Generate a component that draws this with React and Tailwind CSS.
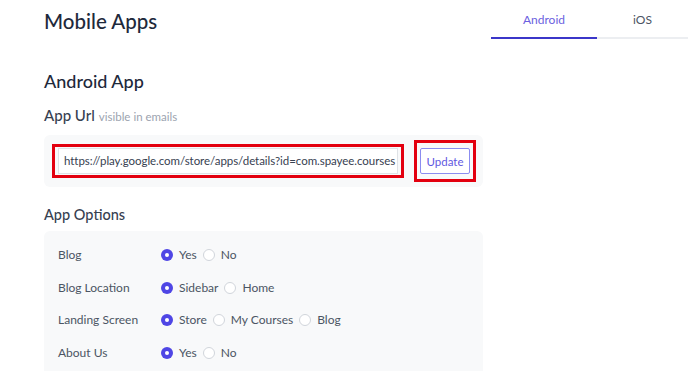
import React from "react";

const font = { fontFamily: 'Lato, "Noto Sans", sans-serif' };

const Radio = ({ checked, label }) => (
  <label className="flex items-center gap-[6px] mr-[6px]">
    {checked ? (
      <span className="w-[12px] h-[12px] rounded-full bg-[#4f46e5] flex items-center justify-center">
        <span className="w-[4px] h-[4px] rounded-full bg-white" />
      </span>
    ) : (
      <span className="w-[12px] h-[12px] rounded-full bg-white border border-[#d1d5db]" />
    )}
    <span>{label}</span>
  </label>
);

const OptionRow = ({ label, options }) => (
  <div className="flex items-center h-[32.5px]">
    <div className="w-[117px] pl-[14px]">{label}</div>
    <div className="flex items-center">
      {options.map((o, i) => (
        <Radio key={o} label={o} checked={i === 0} />
      ))}
    </div>
  </div>
);

export default function App() {
  return (
    <div className="w-[688px] h-[371px] overflow-hidden bg-white text-[#1f2937]" style={font}>
      <div className="flex items-start justify-between">
        <h1 className="pl-[44px] pt-[7px] text-[20.5px] leading-[28px] font-medium text-[#1e293b]">Mobile Apps</h1>
        <div className="flex w-[197px] border-b-2 border-[#eceef1] text-[12px]">
          <div className="w-[106px] h-[39px] -mb-[2px] pt-[2px] flex items-center justify-center border-b-2 border-[#3b36c9] text-[#6b5fe0]">
            Android
          </div>
          <div className="flex-1 h-[37px] pt-[2px] flex items-center justify-center text-[#4b5563]">iOS</div>
        </div>
      </div>

      <div className="pl-[44px] w-[483px]">
        <h2 className="mt-[30px] text-[18px] leading-[24px] font-medium text-[#1e293b]">Android App</h2>
        <div className="mt-[12px] flex items-baseline gap-[4px] leading-[20px]">
          <span className="text-[15px] font-medium text-[#374151]">App Url</span>
          <span className="text-[11.5px] text-[#9ca3af]">visible in emails</span>
        </div>

        <div className="mt-[8px] h-[52px] bg-[#f8f9fa] rounded-md flex items-center pl-[8px] gap-[10px]">
          <div className="border-[3px] border-[#e3000f] px-[3px] py-[1px]">
            <div className="w-[340px] h-[26px] bg-white border border-[#dfe2e6] flex items-center pl-[5px] text-[11.5px] tracking-[-0.05px] text-[#374151] whitespace-nowrap overflow-hidden">
              https://play.google.com/store/apps/details?id=com.spayee.courses
            </div>
          </div>
          <div className="border-[3px] border-[#e3000f] px-[3px] py-[5px]">
            <button className="w-[50px] h-[26px] px-0 bg-white border border-[#8b8cf0] rounded-[2px] text-[11.5px] text-[#5f57df]">
              Update
            </button>
          </div>
        </div>

        <h3 className="mt-[18px] text-[14.5px] leading-[20px] font-medium text-[#374151]">App Options</h3>

        <div className="mt-[6px] bg-[#f8f9fa] rounded-md pt-[8px] pb-[10px] text-[12px] text-[#4b5563]">
          <OptionRow label="Blog" options={["Yes", "No"]} />
          <OptionRow label="Blog Location" options={["Sidebar", "Home"]} />
          <OptionRow label="Landing Screen" options={["Store", "My Courses", "Blog"]} />
          <OptionRow label="About Us" options={["Yes", "No"]} />
        </div>
      </div>
    </div>
  );
}
